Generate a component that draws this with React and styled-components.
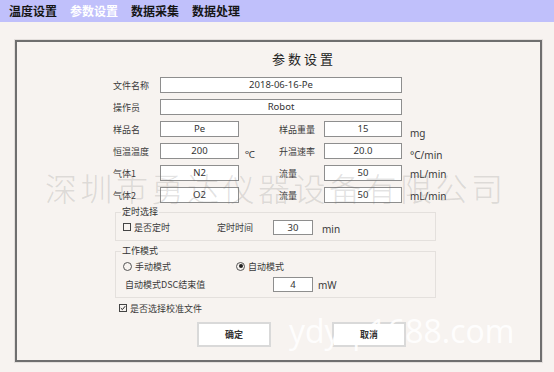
import React from "react";
import styled, { createGlobalStyle } from "styled-components";

const Global = createGlobalStyle`
  html, body { margin: 0; padding: 0; }
  body {
    background: #f7f3f0;
    font-family: "Noto Sans", "Noto Sans CJK SC", sans-serif;
    color: #333;
    width: 554px;
    height: 372px;
    overflow: hidden;
  }
`;

const MenuBar = styled.div`
  height: 22px;
  background: #c0c0fb;
  display: flex;
  align-items: center;
  padding-left: 9px;
  gap: 13px;
`;

const MenuItem = styled.span`
  font-family: "Noto Sans CJK SC", sans-serif;
  font-size: 12px;
  font-weight: 700;
  line-height: 22px;
  color: ${(p) => (p.$active ? "#ffffff" : "#161616")};
`;

const Panel = styled.div`
  box-sizing: border-box;
  margin: 18px 0 0 15px;
  width: 527px;
  height: 322px;
  border: 2px solid #6f6f6f;
  outline: 1px solid #e3dfdc;
  display: flex;
  flex-direction: column;
`;

const Title = styled.div`
  padding: 8px 0 0 255px;
  height: 18px;
  line-height: 18px;
  font-family: "Noto Sans CJK SC", sans-serif;
  font-size: 13px;
  letter-spacing: 3px;
  color: #222;
`;

const Form = styled.div`
  margin: 6px 0 0 96px;
  display: flex;
  flex-direction: column;
`;

const Row = styled.div`
  display: flex;
  align-items: center;
  height: ${(p) => p.$h || 22}px;
  margin-left: ${(p) => p.$indent || 0}px;
  margin-top: ${(p) => p.$top || 0}px;
`;

const Label = styled.span`
  width: ${(p) => p.$w}px;
  flex: none;
  font-family: "Noto Sans CJK SC", sans-serif;
  font-size: 9px;
  color: #3a3a3a;
  padding-left: ${(p) => p.$pad || 0}px;
  box-sizing: border-box;
  white-space: nowrap;
`;

const Box = styled.div`
  box-sizing: border-box;
  width: ${(p) => p.$w}px;
  height: ${(p) => p.$h || 16}px;
  flex: none;
  background: #fff;
  border: 1px solid #8e8e8e;
  font-size: 9.5px;
  line-height: 14px;
  text-align: center;
  color: #333;
`;

const Unit = styled.span`
  flex: none;
  width: ${(p) => (p.$w ? `${p.$w}px` : "auto")};
  margin-left: ${(p) => p.$gap || 0}px;
  padding-top: ${(p) => p.$drop || 0}px;
  padding-left: ${(p) => p.$pad || 0}px;
  font-size: 10px;
  color: #3a3a3a;
  box-sizing: border-box;
`;

const Group = styled.fieldset`
  margin: ${(p) => p.$top || 0}px 0 0 2px;
  width: 321px;
  box-sizing: border-box;
  border: 1px solid #e4e0dd;
  padding: 1px 0 ${(p) => p.$bottom || 5}px 7px;
  min-width: 0;
`;

const Legend = styled.legend`
  margin-left: -2px;
  padding: 0 1px;
  font-family: "Noto Sans CJK SC", sans-serif;
  font-size: 9px;
  line-height: 12px;
  color: #333;
`;

const Option = styled.span`
  display: inline-flex;
  align-items: center;
  gap: 3px;
  width: ${(p) => (p.$w ? `${p.$w}px` : "auto")};
  flex: none;
  font-family: "Noto Sans CJK SC", sans-serif;
  font-size: 9px;
  color: #3a3a3a;
`;

const Square = styled.span`
  box-sizing: border-box;
  width: 8px;
  height: 8px;
  border: 1px solid #444;
  display: inline-flex;
  align-items: center;
  justify-content: center;
`;

const Circle = styled.span`
  box-sizing: border-box;
  width: 9px;
  height: 9px;
  border: 1px solid #555;
  border-radius: 50%;
  display: inline-flex;
  align-items: center;
  justify-content: center;
  &::after {
    content: "";
    display: ${(p) => (p.$on ? "block" : "none")};
    width: 4px;
    height: 4px;
    border-radius: 50%;
    background: #222;
  }
`;

const Buttons = styled.div`
  display: flex;
  gap: 61px;
  margin: 6px 0 0 84px;
`;

const Button = styled.div`
  box-sizing: border-box;
  width: 74px;
  height: 25px;
  background: #fff;
  border: 2px solid #d9d9d9;
  display: flex;
  align-items: center;
  justify-content: center;
  font-family: "Noto Sans CJK SC", sans-serif;
  font-size: 9px;
  font-weight: 700;
  color: #333;
`;

const WatermarkCN = styled.div`
  position: absolute;
  left: 45px;
  top: 171px;
  font-family: "Noto Sans CJK SC", sans-serif;
  font-weight: 300;
  font-size: 32px;
  line-height: 32px;
  letter-spacing: 3.5px;
  color: rgba(110, 110, 110, 0.2);
  pointer-events: none;
  white-space: nowrap;
`;

const WatermarkEN = styled.div`
  position: absolute;
  left: 289px;
  top: 315px;
  font-family: "Open Sans", sans-serif;
  font-size: 32px;
  line-height: 32px;
  color: rgba(255, 255, 255, 0.9);
  pointer-events: none;
  white-space: nowrap;
`;

const Check = ({ on }) => (
  <Square>
    {on && (
      <svg width="6" height="6" viewBox="0 0 6 6">
        <path d="M0.8 3.1 L2.4 4.6 L5.2 1.2" fill="none" stroke="#222" strokeWidth="1" />
      </svg>
    )}
  </Square>
);

const pairRows = [
  { l: "样品名", v: "Pe", u1: "", l2: "样品重量", v2: "15", u2: "mg" },
  { l: "恒温温度", v: "200", u1: "℃", l2: "升温速率", v2: "20.0", u2: "°C/min" },
  { l: "气体1", v: "N2", u1: "", l2: "流量", v2: "50", u2: "mL/min" },
  { l: "气体2", v: "O2", u1: "", l2: "流量", v2: "50", u2: "mL/min" },
];

export default function App() {
  return (
    <>
      <Global />
      <MenuBar>
        <MenuItem>温度设置</MenuItem>
        <MenuItem $active>参数设置</MenuItem>
        <MenuItem>数据采集</MenuItem>
        <MenuItem>数据处理</MenuItem>
      </MenuBar>
      <Panel>
        <Title>参数设置</Title>
        <Form>
          <Row>
            <Label $w={47}>文件名称</Label>
            <Box $w={242}>2018-06-16-Pe</Box>
          </Row>
          <Row>
            <Label $w={47}>操作员</Label>
            <Box $w={242}>Robot</Box>
          </Row>
          {pairRows.map((r, i) => (
            <Row key={i}>
              <Label $w={47}>{r.l}</Label>
              <Box $w={79}>{r.v}</Box>
              <Unit $w={40} $drop={6} $pad={6}>
                {r.u1}
              </Unit>
              <Label $w={45}>{r.l2}</Label>
              <Box $w={78}>{r.v2}</Box>
              <Unit $gap={8} $drop={i < 2 ? 7 : 1}>
                {r.u2}
              </Unit>
            </Row>
          ))}
          <Group $bottom={5}>
            <Legend>定时选择</Legend>
            <Row $h={16}>
              <Option $w={94}>
                <Check />
                是否定时
              </Option>
              <Label $w={56}>定时时间</Label>
              <Box $w={40} $h={15}>30</Box>
              <Unit $gap={9} $drop={4}>min</Unit>
            </Row>
          </Group>
          <Group $top={4} $bottom={5}>
            <Legend>工作模式</Legend>
            <Row $h={16}>
              <Option $w={113}>
                <Circle />
                手动模式
              </Option>
              <Option>
                <Circle $on />
                自动模式
              </Option>
            </Row>
            <Row $h={16} $top={2}>
              <Label $w={150} $pad={2}>自动模式DSC结束值</Label>
              <Box $w={40} $h={15}>4</Box>
              <Unit $gap={5} $drop={2}>mW</Unit>
            </Row>
          </Group>
          <Row $h={16} $top={2} $indent={6}>
            <Option>
              <Check on />
              是否选择校准文件
            </Option>
          </Row>
          <Buttons>
            <Button>确定</Button>
            <Button>取消</Button>
          </Buttons>
        </Form>
      </Panel>
      <WatermarkCN>深圳市勇达仪器设备有限公司</WatermarkCN>
      <WatermarkEN>ydyq.1688.com</WatermarkEN>
    </>
  );
}
